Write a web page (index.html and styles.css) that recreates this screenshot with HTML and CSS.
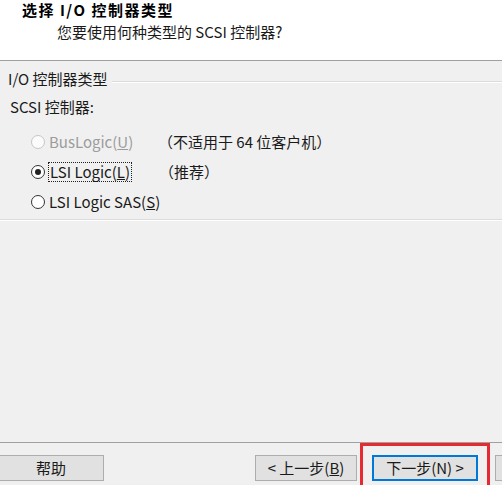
FILE: index.html
```html
<!DOCTYPE html>
<html lang="zh-CN">
<head>
<meta charset="utf-8">
<link rel="stylesheet" href="styles.css">
</head>
<body>
<div class="dialog">
  <div class="header">
    <div class="title">选择 I/O 控制器类型</div>
    <div class="subtitle">您要使用何种类型的 SCSI 控制器?</div>
  </div>
  <div class="content">
    <div class="group">
      <div class="legend-row">
        <span class="legend">I/O 控制器类型</span>
        <span class="legend-line"></span>
      </div>
      <div class="group-label">SCSI 控制器:</div>
      <div class="options">
        <div class="option disabled">
          <span class="radio"></span>
          <span class="opt-label">BusLogic(<u>U</u>)</span>
          <span class="note">（不适用于 64 位客户机）</span>
        </div>
        <div class="option">
          <span class="radio checked"></span>
          <span class="opt-label focused">LSI Logic(<u>L</u>)</span>
          <span class="note">（推荐）</span>
        </div>
        <div class="option">
          <span class="radio"></span>
          <span class="opt-label">LSI Logic SAS(<u>S</u>)</span>
        </div>
      </div>
    </div>
  </div>
  <div class="footer">
    <button class="btn btn-help">帮助</button>
    <div class="nav">
      <button class="btn btn-back">&lt; 上一步(<u>B</u>)</button>
      <button class="btn btn-next">下一步(N) &gt;</button>
      <button class="btn btn-cancel"></button>
    </div>
    <div class="highlight"></div>
  </div>
</div>
</body>
</html>
```
FILE: styles.css
```css
html, body {
  margin: 0;
  padding: 0;
}
body {
  width: 502px;
  height: 485px;
  overflow: hidden;
  background: #f0f0f0;
  font-family: "Noto Sans CJK SC", "Noto Sans", sans-serif;
  font-size: 15px;
  color: #1a1a1a;
}
.dialog {
  display: flex;
  flex-direction: column;
  height: 485px;
}
.header {
  flex: none;
  height: 61px;
  background: #ffffff;
  border-bottom: 1px solid #a0a0a0;
  padding-top: 1px;
  box-sizing: border-box;
}
.title {
  padding-left: 22px;
  font-weight: bold;
  font-size: 15px;
  line-height: 18px;
  letter-spacing: 1.5px;
  color: #000;
}
.subtitle {
  margin-top: 4px;
  padding-left: 57px;
  line-height: 18px;
  color: #1a1a1a;
}
.content {
  flex: 1;
}
.group {
  margin-top: 9px;
  border-bottom: 1px solid #dcdcdc;
  box-shadow: 0 1px 0 #ffffff;
  height: 149px;
}
.legend-row {
  display: flex;
  align-items: flex-start;
  padding-left: 8px;
}
.legend {
  line-height: 18px;
}
.legend-line {
  flex: 1;
  margin-top: 11px;
  margin-left: 4px;
  border-top: 1px solid #dcdcdc;
  border-bottom: 1px solid #ffffff;
}
.group-label {
  margin-top: 10px;
  padding-left: 10px;
  line-height: 18px;
}
.options {
  margin-top: 11px;
  display: flex;
  flex-direction: column;
}
.option {
  display: flex;
  align-items: center;
  height: 30px;
  padding-left: 31px;
}
.radio {
  width: 12px;
  height: 12px;
  border: 1px solid #333333;
  border-radius: 50%;
  background: #ffffff;
  display: flex;
  align-items: center;
  justify-content: center;
  flex: none;
}
.radio.checked::after {
  content: "";
  width: 6px;
  height: 6px;
  border-radius: 50%;
  background: #222222;
}
.disabled .radio {
  border-color: #c6c6c6;
  background: #fbfbfb;
}
.opt-label {
  margin-left: 4px;
  width: 109px;
  line-height: 18px;
  padding: 1px 0;
  flex: none;
}
.opt-label.focused {
  width: auto;
  border: 1px dotted #202020;
  padding: 0 1px;
  margin-left: 3px;
  margin-right: 27px;
}
.disabled .opt-label {
  color: #9c9c9c;
}
.note {
  line-height: 18px;
}
.option:last-child .opt-label {
  width: auto;
}
.footer {
  flex: none;
  position: relative;
  height: 43px;
  border-top: 1px solid #a0a0a0;
  display: flex;
  align-items: flex-start;
  padding-top: 12px;
  box-sizing: border-box;
  overflow: hidden;
}
.btn {
  flex: none;
  font-family: "Noto Sans CJK SC", "Noto Sans", sans-serif;
  font-size: 15px;
  color: #1a1a1a;
  background: #e1e1e1;
  border: 1px solid #adadad;
  height: 26px;
  padding: 0;
  line-height: 22px;
  box-sizing: border-box;
}
.btn-help {
  width: 106px;
  margin-left: -2px;
}
.nav {
  flex: none;
  display: flex;
  margin-left: 151px;
}
.btn-back {
  width: 102px;
}
.btn-next {
  width: 106px;
  margin-left: 15px;
  border: 2px solid #0078d7;
}
.btn-cancel {
  width: 60px;
  margin-left: 17px;
}
.highlight {
  position: absolute;
  left: 360px;
  top: 0;
  width: 130px;
  height: 60px;
  border: 3px solid #e52a30;
  box-sizing: border-box;
}
```
